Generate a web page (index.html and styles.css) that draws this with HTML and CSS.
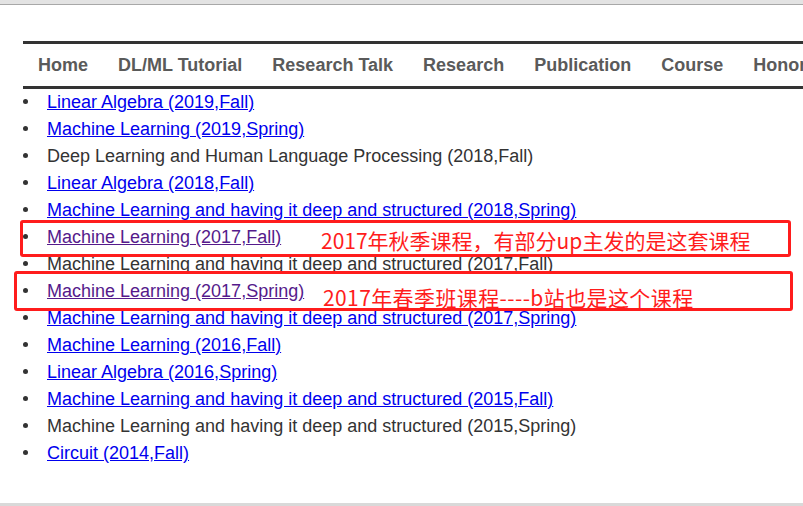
FILE: index.html
```html
<!DOCTYPE html>
<html>
<head>
<meta charset="utf-8">
<link rel="stylesheet" href="styles.css">
</head>
<body>
<div class="page">
  <div class="topbar"></div>
  <div class="content">
    <nav class="nav">
      <ul class="nav-list">
        <li>Home</li>
        <li>DL/ML Tutorial</li>
        <li>Research Talk</li>
        <li>Research</li>
        <li>Publication</li>
        <li>Course</li>
        <li>Honor</li>
        <li>Contact</li>
      </ul>
    </nav>
    <ul class="courses">
      <li><a href="#a1">Linear Algebra (2019,Fall)</a></li>
      <li><a href="#a2">Machine Learning (2019,Spring)</a></li>
      <li>Deep Learning and Human Language Processing (2018,Fall)</li>
      <li><a href="#a3">Linear Algebra (2018,Fall)</a></li>
      <li><a href="#a4">Machine Learning and having it deep and structured (2018,Spring)</a></li>
      <li><a class="visited" href="#a5">Machine Learning (2017,Fall)</a></li>
      <li>Machine Learning and having it deep and structured (2017,Fall)</li>
      <li><a class="visited" href="#a6">Machine Learning (2017,Spring)</a></li>
      <li><a href="#a7">Machine Learning and having it deep and structured (2017,Spring)</a></li>
      <li><a href="#a8">Machine Learning (2016,Fall)</a></li>
      <li><a href="#a9">Linear Algebra (2016,Spring)</a></li>
      <li><a href="#a10">Machine Learning and having it deep and structured (2015,Fall)</a></li>
      <li>Machine Learning and having it deep and structured (2015,Spring)</li>
      <li><a href="#a11">Circuit (2014,Fall)</a></li>
    </ul>
  </div>
  <div class="bottombar"></div>

  <div class="mark mark-one"></div>
  <div class="mark mark-two"></div>
  <div class="note note-one">2017年秋季课程，有部分up主发的是这套课程</div>
  <div class="note note-two">2017年春季班课程----b站也是这个课程</div>
</div>
</body>
</html>
```

FILE: styles.css
```css
html, body {
  margin: 0;
  padding: 0;
  background: #fff;
  overflow: hidden;
}

.page {
  position: relative;
  width: 803px;
  height: 506px;
  display: flex;
  flex-direction: column;
  overflow: hidden;
  font-family: Arial, "Liberation Sans", sans-serif;
}

.topbar {
  height: 4px;
  background: #e3e3e3;
  border-bottom: 1px solid #a8a8a8;
  flex: none;
}

.content {
  padding: 36px 0 0 23px;
  flex: 1;
}

.nav {
  border-top: 3px solid #333;
  border-bottom: 3px solid #333;
  width: 900px;
}

.nav-list {
  list-style: none;
  margin: 0;
  padding: 0;
  display: flex;
  white-space: nowrap;
}

.nav-list li {
  font-size: 18px;
  font-weight: bold;
  color: #5a5a5a;
  line-height: 42px;
  padding: 0 15px;
}

.courses {
  list-style: none;
  margin: 0;
  padding: 0;
  font-size: 18px;
  line-height: 27px;
  color: #333;
  white-space: nowrap;
}

.courses li::before {
  content: "";
  display: inline-block;
  width: 5px;
  height: 5px;
  border-radius: 50%;
  background: #333;
  margin: 0 19px 0 0;
  vertical-align: 4px;
}

.courses a {
  color: #0000ee;
}

.courses a.visited {
  color: #551a8b;
}

.bottombar {
  height: 3px;
  background: #d9d9d9;
  flex: none;
}

.mark {
  position: absolute;
  border: 3px solid #ff1c1c;
  border-radius: 3px;
  box-sizing: border-box;
}

.mark-one {
  left: 20px;
  top: 220px;
  width: 771px;
  height: 37px;
}

.mark-two {
  left: 14px;
  top: 271px;
  width: 779px;
  height: 40px;
}

.note {
  position: absolute;
  color: #ff1c1c;
  font-family: "Microsoft YaHei", "Noto Sans CJK SC", sans-serif;
  font-size: 21px;
  line-height: 26px;
  white-space: nowrap;
}

.note-one {
  left: 321px;
  top: 227px;
}

.note-two {
  left: 323px;
  top: 284px;
  letter-spacing: 0.4px;
}
```
